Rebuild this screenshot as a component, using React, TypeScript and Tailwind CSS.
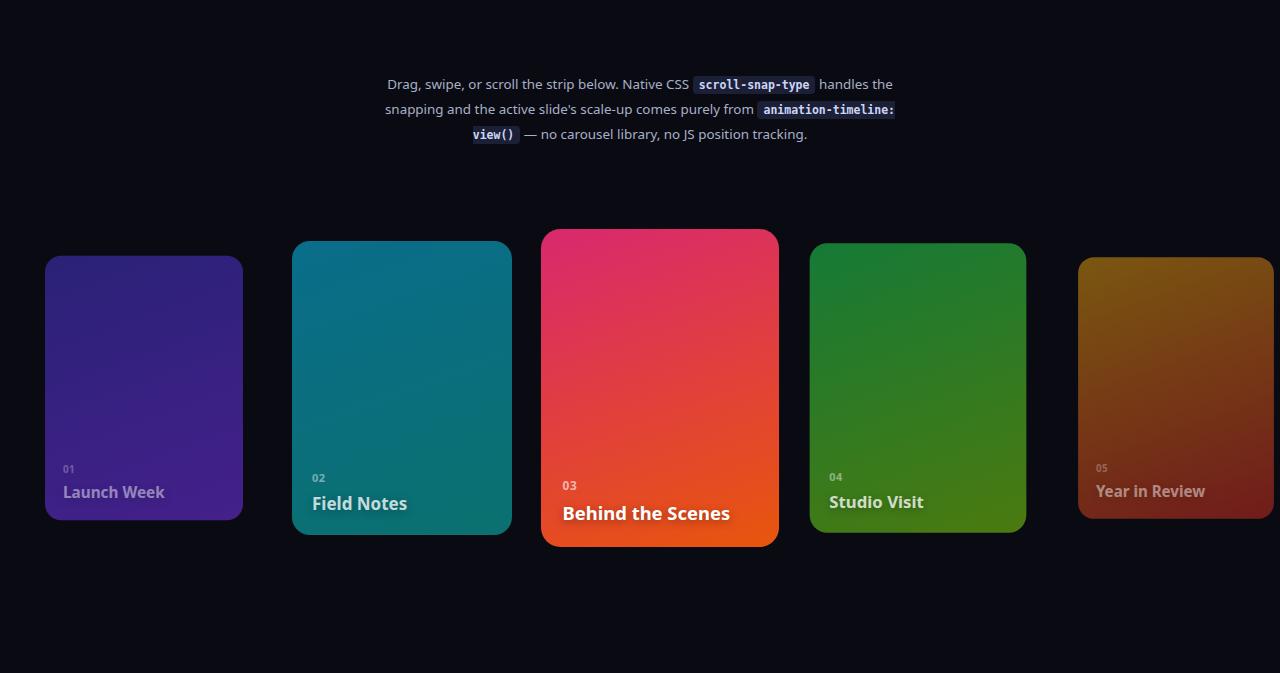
import React from 'react';

interface Slide {
  num: string;
  title: string;
  bg: string;
  scale: string;
  text: string;
}

const SLIDES: Slide[] = [
  { num: '01', title: 'Launch Week', bg: 'bg-[linear-gradient(160deg,#2a2277_0%,#44208b_100%)]', scale: 'scale-[0.9]', text: 'opacity-45' },
  { num: '02', title: 'Field Notes', bg: 'bg-[linear-gradient(160deg,#0a6d8b_0%,#0b706e_100%)]', scale: 'scale-100', text: 'opacity-75' },
  { num: '03', title: 'Behind the Scenes', bg: 'bg-[linear-gradient(160deg,#d9286f_0%,#e8560c_100%)]', scale: 'scale-[1.082]', text: 'opacity-100' },
  { num: '04', title: 'Studio Visit', bg: 'bg-[linear-gradient(160deg,#157a36_0%,#4b7a0f_100%)]', scale: 'scale-[0.985]', text: 'opacity-75' },
  { num: '05', title: 'Year in Review', bg: 'bg-[linear-gradient(160deg,#7a5710_0%,#711b1b_100%)]', scale: 'scale-[0.89]', text: 'opacity-45' },
];

function Code({ children }: { children: React.ReactNode }) {
  return (
    <code className="bg-[#1b2036] text-[#cdd5f7] rounded-[4px] px-[6px] py-[2px] text-[11.5px] font-semibold font-['DejaVu_Sans_Mono',monospace]">
      {children}
    </code>
  );
}

export default function App() {
  return (
    <div className="min-h-[673px] bg-[#0a0b12] font-['Noto_Sans',sans-serif] overflow-hidden">
      <p className="pt-[72px] mx-auto max-w-[524px] text-center text-[13.4px] leading-[24px] text-[#a8b0c8]">
        Drag, swipe, or scroll the strip below. Native CSS <Code>scroll-snap-type</Code> handles the
        snapping and the active slide's scale-up comes purely from <Code>animation-timeline: view()</Code>{' '}
        — no carousel library, no JS position tracking.
      </p>

      <div className="h-[482px] flex items-center gap-[38px] pl-[34px]">
        {SLIDES.map((s) => (
          <div
            key={s.num}
            className={`shrink-0 w-[220px] h-[294px] rounded-[18px] ${s.bg} ${s.scale} flex flex-col justify-end px-[20px] pb-[19px]`}
          >
            <div className={s.text}>
              <div className="text-[11px] font-bold text-white/60 tracking-[0.5px] mb-[4px]">{s.num}</div>
              <div className="text-[17px] font-bold text-white [text-shadow:0_2px_8px_rgba(0,0,0,0.35)]">{s.title}</div>
            </div>
          </div>
        ))}
      </div>
    </div>
  );
}
